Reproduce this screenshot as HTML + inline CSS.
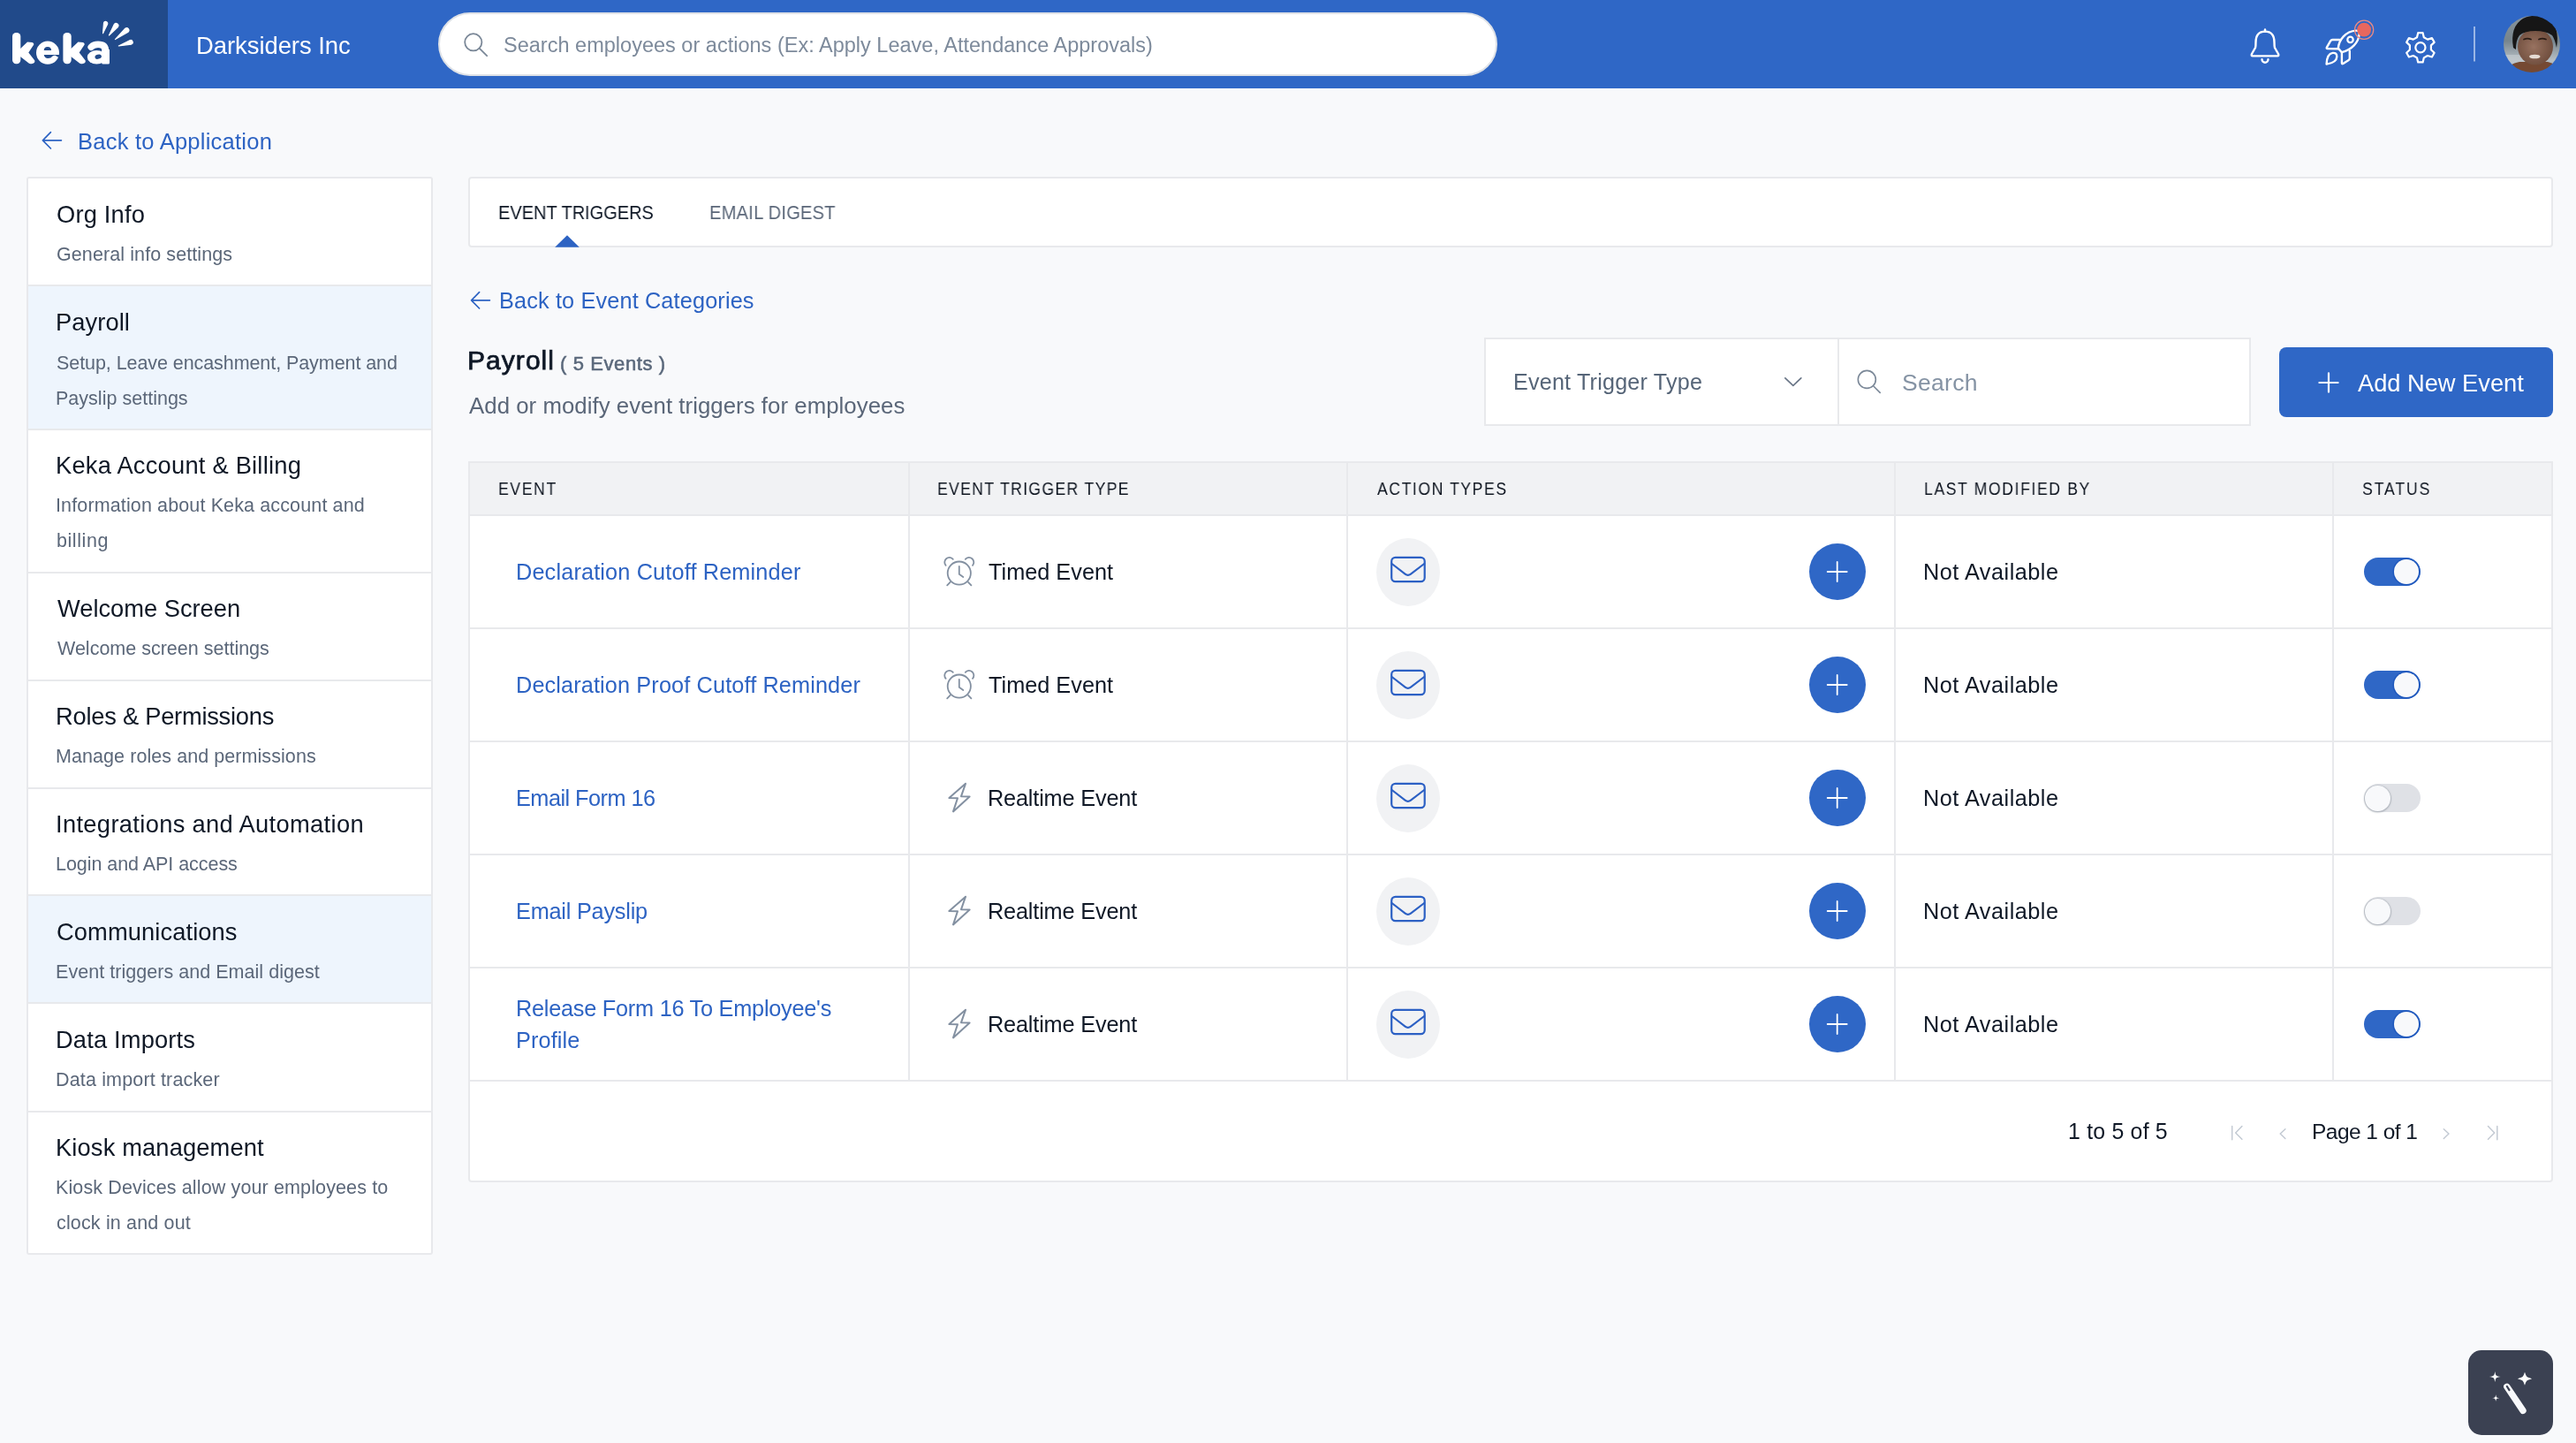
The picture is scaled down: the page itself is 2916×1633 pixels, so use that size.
<!DOCTYPE html>
<html><head><meta charset="utf-8"><title>Keka - Event Triggers</title>
<style>
html,body{margin:0;padding:0;}
body{width:2916px;height:1633px;overflow:hidden;position:relative;background:#f8f9fb;font-family:"Liberation Sans",sans-serif;}
.t{position:absolute;white-space:nowrap;will-change:transform;}
svg{overflow:visible}
</style></head><body>
<div style="position:absolute;left:0px;top:0px;width:2916px;height:100px;background:#2f67c6"></div>
<div style="position:absolute;left:0px;top:0px;width:190px;height:100px;background:#214a8a"></div>
<svg style="position:absolute;left:0;top:0" width="190" height="100" viewBox="0 0 190 100"><rect x="14.00" y="36.9" width="9.3" height="35.4" rx="4.2" fill="#fff"/><path d="M21.00 57 L31.00 47.6 L36.60 47.9 Q39.50 49.5 37.60 51.4 L32.30 59.6 L39.30 68.6 Q40.00 71.8 35.60 72.3 Q33.60 72.6 32.60 71.6 L21.00 62.6 Z" fill="#fff"/><rect x="71.40" y="36.9" width="9.3" height="35.4" rx="4.2" fill="#fff"/><path d="M78.40 57 L88.40 47.6 L94.00 47.9 Q96.90 49.5 95.00 51.4 L89.70 59.6 L96.70 68.6 Q97.40 71.8 93.00 72.3 Q91.00 72.6 90.00 71.6 L78.40 62.6 Z" fill="#fff"/><ellipse cx="54" cy="59.65" rx="13" ry="13.05" fill="#fff"/><path d="M49.7 57.1 Q49.9 52.9 53.9 52.9 Q57.9 52.9 58.1 57.1 Z" fill="#214a8a"/><path d="M49.7 62 H68 V66.2 Q65.5 64.2 62.6 62.7 Q60.4 62.5 59.6 63.4 Q57.6 65.9 54.2 65.9 Q50.6 65.9 49.7 62 Z" fill="#214a8a"/><path d="M103.2 53.3 Q106 50.3 111 50.3 Q119.6 50.3 119.6 58" fill="none" stroke="#fff" stroke-width="7.5" stroke-linecap="round"/><ellipse cx="109.4" cy="64.75" rx="10.6" ry="7.75" fill="#fff"/><path d="M115.1 56 H124 V71 Q124 72.5 122.5 72.5 H116.6 Q115.1 72.5 115.1 71 Z" fill="#fff"/><ellipse cx="111.2" cy="64.2" rx="3.8" ry="2.5" transform="rotate(-15 111.2 64.2)" fill="#214a8a"/><path d="M116.50 37.70 L121.72 27.19 A2.2 2.2 0 0 0 117.48 26.01 Z" fill="#fff" stroke="#fff" stroke-width="1.1" stroke-linejoin="round"/><path d="M123.40 40.00 L133.50 30.53 A2.6 2.6 0 0 0 129.30 27.47 Z" fill="#fff" stroke="#fff" stroke-width="1.1" stroke-linejoin="round"/><path d="M130.40 44.60 L145.02 36.23 A2.6 2.6 0 0 0 141.78 32.17 Z" fill="#fff" stroke="#fff" stroke-width="1.1" stroke-linejoin="round"/><path d="M134.30 52.00 L148.70 50.09 A2.4 2.4 0 0 0 147.30 45.51 Z" fill="#fff" stroke="#fff" stroke-width="1.1" stroke-linejoin="round"/></svg>
<div class="t" id="t0" style="left:221.6px;top:37.6px;font-size:27.4px;line-height:27.4px;color:#ffffff;letter-spacing:-0.027px;">Darksiders Inc</div>
<div style="position:absolute;left:496px;top:14px;width:1199px;height:72px;box-sizing:border-box;background:#fff;border:2px solid #dfe2e7;border-radius:36px"></div>
<svg style="position:absolute;left:520px;top:33px" width="40" height="40" viewBox="520 33 40 40">
<circle cx="535.8" cy="47.8" r="9.6" fill="none" stroke="#7b8898" stroke-width="1.8"/>
<path d="M542.6 54.6 L551.2 63.2" stroke="#7b8898" stroke-width="1.8" stroke-linecap="round"/>
</svg>
<div class="t" id="t1" style="left:569.8px;top:39.8px;font-size:23.5px;line-height:23.5px;color:#7d8a9b;letter-spacing:0.012px;">Search employees or actions (Ex: Apply Leave, Attendance Approvals)</div>
<svg style="position:absolute;left:2530px;top:20px" width="380" height="70" viewBox="2530 20 380 70">
<g fill="none" stroke="#fff" stroke-width="2.4" stroke-linecap="round" stroke-linejoin="round">
<path d="M2564 33.5 V35.6"/>
<path d="M2550 63.4 H2578 Q2580 63.4 2579 61 L2575 54 Q2574.5 52.5 2574.5 48 Q2574.5 35.6 2564 35.6 Q2553.5 35.6 2553.5 48 Q2553.5 52.5 2553 54 L2549 61 Q2548 63.4 2550 63.4 Z"/>
<path d="M2560.5 67.3 A3.5 3.5 0 0 0 2567.5 67.3"/>
<!-- rocket -->
<path d="M2646.8 54.6 C2647.6 45.2 2655 35.4 2667 34.6 Q2670.9 34.4 2670.7 38.2 C2670 48.2 2662 56.2 2650.9 59.2 Z" stroke-width="2.4"/>
<circle cx="2660.5" cy="44.9" r="3.2" stroke-width="2.2"/>
<path d="M2648.2 45 L2640.3 45 Q2639 45 2638.2 46.2 L2633.9 53.6 Q2633.2 55 2634.7 55 L2646.4 55.2" stroke-width="2.4"/>
<path d="M2659.8 57.6 V66.1 Q2659.8 67.3 2658.7 67.9 L2652.4 72 Q2650.9 72.9 2650.9 71.3 V59.6" stroke-width="2.4"/>
<path d="M2633.6 72.6 C2633.8 66 2636 60.6 2640.6 59.9 Q2645.3 59.4 2645.3 64.2 Q2644.9 70.9 2633.6 72.6 Z" stroke-width="2.4"/>
<!-- gear -->
<circle cx="2739.9" cy="53.8" r="5.6" stroke-width="2.2"/>
<path d="M2736.00 42.20 L2737.20 37.20 L2742.60 37.20 L2743.80 42.20 L2748.00 44.62 L2752.93 43.16 L2755.63 47.84 L2751.90 51.38 L2751.90 56.22 L2755.63 59.76 L2752.93 64.44 L2748.00 62.98 L2743.80 65.40 L2742.60 70.40 L2737.20 70.40 L2736.00 65.40 L2731.80 62.98 L2726.87 64.44 L2724.17 59.76 L2727.90 56.22 L2727.90 51.38 L2724.17 47.84 L2726.87 43.16 L2731.80 44.62 Z" stroke-width="2.2"/>
</g>
<circle cx="2676.1" cy="33.7" r="10.6" fill="none" stroke="#ea8a84" stroke-width="1.3"/>
<circle cx="2676.1" cy="33.7" r="7.9" fill="#e8675e"/>
<path d="M2801 30 V69.6" stroke="#9ab6e6" stroke-width="2"/>
</svg>
<svg style="position:absolute;left:2834px;top:18px" width="64" height="64" viewBox="0 0 64 64">
<defs><clipPath id="av"><circle cx="32" cy="32" r="32"/></clipPath>
<linearGradient id="avbg" x1="0" y1="0" x2="0" y2="1"><stop offset="0" stop-color="#8a959c"/><stop offset="0.45" stop-color="#77858d"/><stop offset="0.75" stop-color="#b6bec3"/><stop offset="1" stop-color="#9aa3a8"/></linearGradient>
<radialGradient id="face" cx="0.45" cy="0.5" r="0.6"><stop offset="0" stop-color="#987260"/><stop offset="1" stop-color="#6b4a3a"/></radialGradient><filter id="avb" x="-10%" y="-10%" width="120%" height="120%"><feGaussianBlur stdDeviation="0.7"/></filter></defs>
<g clip-path="url(#av)"><g filter="url(#avb)">
<rect x="-4" y="-4" width="72" height="72" fill="url(#avbg)"/>
<rect x="0" y="44" width="24" height="10" fill="#c3cace" opacity="0.7"/>
<path d="M0 64 Q6 54 18 52 L50 52 Q60 54 64 64 Z" fill="#744a31"/>
<ellipse cx="36" cy="35" rx="20" ry="20.5" fill="url(#face)"/>
<path d="M11 36 Q7 12 22 3 Q34 -3 50 2 Q64 12 60 36 Q58 26 55 22 Q48 17 36 17 Q24 17 18 22 Q14 27 14 38 Z" fill="#141414"/>
<path d="M23 26.5 Q27 24.8 31 26.5 M40 26.5 Q44 24.8 48 26.5" stroke="#2a1c15" stroke-width="1.8" fill="none" stroke-linecap="round"/>
<ellipse cx="35.3" cy="46" rx="6.2" ry="2.3" fill="#e6dcd4"/>
</g></g></svg>
<svg style="position:absolute;left:40px;top:140px" width="40" height="40" viewBox="40 140 40 40">
<path d="M57.4 149.6 L48.4 158.8 L57.4 168 M48.4 158.8 H69.4" fill="none" stroke="#2d63c3" stroke-width="1.7" stroke-linecap="round" stroke-linejoin="round"/></svg>
<div class="t" id="t2" style="left:87.6px;top:148.4px;font-size:25.5px;line-height:25.5px;color:#2d63c3;letter-spacing:0.245px;">Back to Application</div>
<div style="position:absolute;left:30px;top:200px;width:460px;height:1220px;box-sizing:border-box;background:#fff;border:2px solid #e8e9ec;border-radius:3px"></div>
<div style="position:absolute;left:32px;top:322px;width:456px;height:2px;background:#e8e9ec"></div>
<div class="t" id="t3" style="left:63.7px;top:229.1px;font-size:27.3px;line-height:27.3px;color:#0f1826;letter-spacing:0.182px;">Org Info</div>
<div class="t" id="t4" style="left:63.7px;top:278.4px;font-size:21.5px;line-height:21.5px;color:#5b6779;letter-spacing:0.095px;">General info settings</div>
<div style="position:absolute;left:32px;top:324px;width:456px;height:161px;background:#eef5fd"></div>
<div style="position:absolute;left:32px;top:485px;width:456px;height:2px;background:#e8e9ec"></div>
<div class="t" id="t5" style="left:62.7px;top:351.1px;font-size:27.3px;line-height:27.3px;color:#0f1826;letter-spacing:0.083px;">Payroll</div>
<div class="t" id="t6" style="left:63.7px;top:400.5px;font-size:21.5px;line-height:21.5px;color:#5b6779;letter-spacing:-0.072px;">Setup, Leave encashment, Payment and</div>
<div class="t" id="t7" style="left:62.7px;top:440.5px;font-size:21.5px;line-height:21.5px;color:#5b6779;letter-spacing:0.016px;">Payslip settings</div>
<div style="position:absolute;left:32px;top:647px;width:456px;height:2px;background:#e8e9ec"></div>
<div class="t" id="t8" style="left:62.7px;top:513.1px;font-size:27.3px;line-height:27.3px;color:#0f1826;letter-spacing:0.223px;">Keka Account &amp; Billing</div>
<div class="t" id="t9" style="left:62.7px;top:562.4px;font-size:21.5px;line-height:21.5px;color:#5b6779;letter-spacing:0.13px;">Information about Keka account and</div>
<div class="t" id="t10" style="left:63.7px;top:602.4px;font-size:21.5px;line-height:21.5px;color:#5b6779;letter-spacing:0.567px;">billing</div>
<div style="position:absolute;left:32px;top:769px;width:456px;height:2px;background:#e8e9ec"></div>
<div class="t" id="t11" style="left:64.7px;top:675.1px;font-size:27.3px;line-height:27.3px;color:#0f1826;letter-spacing:-0.018px;">Welcome Screen</div>
<div class="t" id="t12" style="left:64.7px;top:724.4px;font-size:21.5px;line-height:21.5px;color:#5b6779;letter-spacing:0.002px;">Welcome screen settings</div>
<div style="position:absolute;left:32px;top:891px;width:456px;height:2px;background:#e8e9ec"></div>
<div class="t" id="t13" style="left:62.7px;top:797.1px;font-size:27.3px;line-height:27.3px;color:#0f1826;letter-spacing:-0.249px;">Roles &amp; Permissions</div>
<div class="t" id="t14" style="left:62.7px;top:846.4px;font-size:21.5px;line-height:21.5px;color:#5b6779;letter-spacing:0.069px;">Manage roles and permissions</div>
<div style="position:absolute;left:32px;top:1012px;width:456px;height:2px;background:#e8e9ec"></div>
<div class="t" id="t15" style="left:62.7px;top:919.1px;font-size:27.3px;line-height:27.3px;color:#0f1826;letter-spacing:0.334px;">Integrations and Automation</div>
<div class="t" id="t16" style="left:62.7px;top:968.4px;font-size:21.5px;line-height:21.5px;color:#5b6779;letter-spacing:-0.048px;">Login and API access</div>
<div style="position:absolute;left:32px;top:1014px;width:456px;height:120px;background:#eef5fd"></div>
<div style="position:absolute;left:32px;top:1134px;width:456px;height:2px;background:#e8e9ec"></div>
<div class="t" id="t17" style="left:63.7px;top:1041.1px;font-size:27.3px;line-height:27.3px;color:#0f1826;letter-spacing:0.095px;">Communications</div>
<div class="t" id="t18" style="left:62.7px;top:1090.4px;font-size:21.5px;line-height:21.5px;color:#5b6779;letter-spacing:0.04px;">Event triggers and Email digest</div>
<div style="position:absolute;left:32px;top:1257px;width:456px;height:2px;background:#e8e9ec"></div>
<div class="t" id="t19" style="left:62.7px;top:1163.1px;font-size:27.3px;line-height:27.3px;color:#0f1826;letter-spacing:0.156px;">Data Imports</div>
<div class="t" id="t20" style="left:62.7px;top:1212.4px;font-size:21.5px;line-height:21.5px;color:#5b6779;letter-spacing:0.155px;">Data import tracker</div>
<div class="t" id="t21" style="left:62.7px;top:1285.1px;font-size:27.3px;line-height:27.3px;color:#0f1826;letter-spacing:0.134px;">Kiosk management</div>
<div class="t" id="t22" style="left:62.7px;top:1333.9px;font-size:21.5px;line-height:21.5px;color:#5b6779;letter-spacing:0.128px;">Kiosk Devices allow your employees to</div>
<div class="t" id="t23" style="left:63.7px;top:1373.9px;font-size:21.5px;line-height:21.5px;color:#5b6779;letter-spacing:0.156px;">clock in and out</div>
<div style="position:absolute;left:530px;top:200px;width:2360px;height:80px;box-sizing:border-box;background:#fff;border:2px solid #e8e9ec;border-radius:4px"></div>
<div class="t" id="t24" style="left:564.0px;top:229.5px;font-size:21.8px;line-height:21.8px;color:#0f1826;letter-spacing:-0.048px;transform:scaleX(0.92);transform-origin:0 0;">EVENT TRIGGERS</div>
<div class="t" id="t25" style="left:803.0px;top:229.5px;font-size:21.8px;line-height:21.8px;color:#5b6779;letter-spacing:0.212px;transform:scaleX(0.925);transform-origin:0 0;">EMAIL DIGEST</div>
<svg style="position:absolute;left:620px;top:260px" width="50" height="22" viewBox="620 260 50 22"><path d="M628.2 279.8 L642 266.2 L655.8 279.8 Z" fill="#2d63c3"/></svg>
<svg style="position:absolute;left:525px;top:320px" width="40" height="40" viewBox="525 320 40 40">
<path d="M542.6 330.6 L533.6 339.8 L542.6 349 M533.6 339.8 H554.4" fill="none" stroke="#2d63c3" stroke-width="1.7" stroke-linecap="round" stroke-linejoin="round"/></svg>
<div class="t" id="t26" style="left:565.2px;top:328.2px;font-size:25.3px;line-height:25.3px;color:#2d63c3;letter-spacing:0.133px;">Back to Event Categories</div>
<div class="t" id="t27" style="left:529.4px;top:393.0px;font-size:30px;line-height:30px;color:#0f1826;letter-spacing:1.0499999999999998px;-webkit-text-stroke:0.75px #0f1826;">Payroll</div>
<div class="t" id="t28" style="left:634.0px;top:401.1px;font-size:22px;line-height:22px;color:#5a687b;letter-spacing:0.6009999999999999px;-webkit-text-stroke:0.55px #5a687b;">( 5 Events )</div>
<div class="t" id="t29" style="left:531.4px;top:447.2px;font-size:25.8px;line-height:25.8px;color:#5b6779;letter-spacing:0.037px;">Add or modify event triggers for employees</div>
<div style="position:absolute;left:1680px;top:382px;width:868px;height:100px;box-sizing:border-box;background:#fff;border:2px solid #e8e9ec"></div>
<div style="position:absolute;left:2080px;top:384px;width:2px;height:96px;background:#e8e9ec"></div>
<div class="t" id="t30" style="left:1713.0px;top:419.7px;font-size:25.1px;line-height:25.1px;color:#566578;letter-spacing:0.219px;">Event Trigger Type</div>
<svg style="position:absolute;left:2015px;top:420px" width="30" height="22" viewBox="2015 420 30 22">
<path d="M2020.8 427.8 L2029.8 436.3 L2038.8 427.8" fill="none" stroke="#6b7788" stroke-width="1.7" stroke-linecap="round" stroke-linejoin="round"/></svg>
<svg style="position:absolute;left:2095px;top:410px" width="40" height="40" viewBox="2095 410 40 40">
<circle cx="2113.3" cy="429.4" r="10" fill="none" stroke="#7b8898" stroke-width="1.6"/>
<path d="M2120.6 436.8 L2128.2 444.4" stroke="#7b8898" stroke-width="1.6" stroke-linecap="round"/></svg>
<div class="t" id="t31" style="left:2153.2px;top:419.8px;font-size:26.5px;line-height:26.5px;color:#8593a4;letter-spacing:0.3px;">Search</div>
<div style="position:absolute;left:2580px;top:393px;width:310px;height:79px;background:#2f67c6;border-radius:8px"></div>
<svg style="position:absolute;left:2620px;top:418px" width="32" height="32" viewBox="2620 418 32 32">
<path d="M2636 422.4 V443.6 M2625.4 433 H2646.6" stroke="#fff" stroke-width="2.2" stroke-linecap="round"/></svg>
<div class="t" id="t32" style="left:2669.2px;top:420.3px;font-size:27.3px;line-height:27.3px;color:#ffffff;letter-spacing:-0.031px;">Add New Event</div>
<div style="position:absolute;left:530px;top:522px;width:2360px;height:816px;box-sizing:border-box;background:#fff;border:2px solid #e8e9ec;border-radius:0 0 4px 4px"></div>
<div style="position:absolute;left:532px;top:524px;width:2356px;height:58px;background:#f1f2f4"></div>
<div style="position:absolute;left:532px;top:582px;width:2356px;height:2px;background:#e8e9ec"></div>
<div style="position:absolute;left:1028px;top:524px;width:2px;height:699px;background:#e8e9ec"></div>
<div style="position:absolute;left:1524px;top:524px;width:2px;height:699px;background:#e8e9ec"></div>
<div style="position:absolute;left:2144px;top:524px;width:2px;height:699px;background:#e8e9ec"></div>
<div style="position:absolute;left:2640px;top:524px;width:2px;height:699px;background:#e8e9ec"></div>
<div style="position:absolute;left:532px;top:710px;width:2356px;height:2px;background:#e8e9ec"></div>
<div style="position:absolute;left:532px;top:838px;width:2356px;height:2px;background:#e8e9ec"></div>
<div style="position:absolute;left:532px;top:966px;width:2356px;height:2px;background:#e8e9ec"></div>
<div style="position:absolute;left:532px;top:1094px;width:2356px;height:2px;background:#e8e9ec"></div>
<div style="position:absolute;left:532px;top:1222px;width:2356px;height:2px;background:#e8e9ec"></div>
<div class="t" id="t33" style="left:564.2px;top:543.8px;font-size:19.6px;line-height:19.6px;color:#0e1520;letter-spacing:1.775px;transform:scaleX(0.9);transform-origin:0 0;">EVENT</div>
<div class="t" id="t34" style="left:1061.0px;top:543.8px;font-size:19.6px;line-height:19.6px;color:#0e1520;letter-spacing:1.47px;transform:scaleX(0.9);transform-origin:0 0;">EVENT TRIGGER TYPE</div>
<div class="t" id="t35" style="left:1559.0px;top:543.8px;font-size:19.6px;line-height:19.6px;color:#0e1520;letter-spacing:1.718px;transform:scaleX(0.9);transform-origin:0 0;">ACTION TYPES</div>
<div class="t" id="t36" style="left:2178.2px;top:543.8px;font-size:19.6px;line-height:19.6px;color:#0e1520;letter-spacing:1.773px;transform:scaleX(0.9);transform-origin:0 0;">LAST MODIFIED BY</div>
<div class="t" id="t37" style="left:2673.8px;top:543.8px;font-size:19.6px;line-height:19.6px;color:#0e1520;letter-spacing:2.08px;transform:scaleX(0.9);transform-origin:0 0;">STATUS</div>
<div class="t" id="t38" style="left:583.6px;top:634.9px;font-size:25.3px;line-height:25.3px;color:#2d63c3;letter-spacing:0.142px;">Declaration Cutoff Reminder</div>
<svg style="position:absolute;left:1065px;top:625.3px" width="44" height="44" viewBox="1065 625.3 44 44">
<g fill="none" stroke="#8390a1" stroke-width="1.8" stroke-linecap="round" stroke-linejoin="round">
<circle cx="1085.8" cy="648.9" r="13.1"/>
<path d="M1085.8 641.2 V650.1 L1090.3 653.3"/>
<path d="M1070.6 640.2 A5.4 5.4 0 0 1 1078.8 633.1"/>
<path d="M1101 640.2 A5.4 5.4 0 0 0 1092.8 633.1"/>
<path d="M1075.6 659.1 L1072.2 662.7 M1096 659.1 L1099.4 662.7"/>
</g></svg>
<div class="t" id="t39" style="left:1118.8px;top:634.8px;font-size:25.3px;line-height:25.3px;color:#0f1826;">Timed Event</div>
<div style="position:absolute;left:1558.1px;top:608.6999999999999px;width:72.1px;height:77.2px;background:#f1f2f4;border-radius:50%"></div>
<svg style="position:absolute;left:1570px;top:625.3px" width="48" height="44" viewBox="1570 625.3 48 44">
<g fill="none" stroke="#2c60c4" stroke-width="2.2" stroke-linecap="round" stroke-linejoin="round">
<rect x="1575.2" y="631.1" width="37.5" height="27.4" rx="4.4"/>
<path d="M1575.6 638.3 L1590.6 649.9 Q1593.8 652.3 1597 649.9 L1612.2 638.3"/>
</g></svg>
<div style="position:absolute;left:2047.7px;top:615.3px;width:64px;height:64px;background:#2f67c6;border-radius:50%"></div>
<svg style="position:absolute;left:2065px;top:632.3px" width="30" height="30" viewBox="2065 632.3 30 30">
<path d="M2079.7 636.3 V658.3 M2068.7 647.3 H2090.7" stroke="#fff" stroke-width="1.8" stroke-linecap="round"/></svg>
<div class="t" id="t40" style="left:2177.2px;top:634.8px;font-size:25.3px;line-height:25.3px;color:#0f1826;letter-spacing:0.485px;">Not Available</div>
<div style="position:absolute;left:2676px;top:631.3px;width:64px;height:32px;background:#2f67c6;border-radius:16px"></div>
<div style="position:absolute;left:2709.9px;top:633.3px;width:28px;height:28px;box-sizing:border-box;background:#f8f9fb;border-radius:50%;box-shadow:0 0 0 1.5px #1f58bd"></div>
<div class="t" id="t41" style="left:583.6px;top:762.9px;font-size:25.3px;line-height:25.3px;color:#2d63c3;letter-spacing:0.116px;">Declaration Proof Cutoff Reminder</div>
<svg style="position:absolute;left:1065px;top:753.3px" width="44" height="44" viewBox="1065 753.3 44 44">
<g fill="none" stroke="#8390a1" stroke-width="1.8" stroke-linecap="round" stroke-linejoin="round">
<circle cx="1085.8" cy="776.9" r="13.1"/>
<path d="M1085.8 769.2 V778.1 L1090.3 781.3"/>
<path d="M1070.6 768.2 A5.4 5.4 0 0 1 1078.8 761.1"/>
<path d="M1101 768.2 A5.4 5.4 0 0 0 1092.8 761.1"/>
<path d="M1075.6 787.1 L1072.2 790.7 M1096 787.1 L1099.4 790.7"/>
</g></svg>
<div class="t" id="t42" style="left:1118.8px;top:762.8px;font-size:25.3px;line-height:25.3px;color:#0f1826;">Timed Event</div>
<div style="position:absolute;left:1558.1px;top:736.6999999999999px;width:72.1px;height:77.2px;background:#f1f2f4;border-radius:50%"></div>
<svg style="position:absolute;left:1570px;top:753.3px" width="48" height="44" viewBox="1570 753.3 48 44">
<g fill="none" stroke="#2c60c4" stroke-width="2.2" stroke-linecap="round" stroke-linejoin="round">
<rect x="1575.2" y="759.1" width="37.5" height="27.4" rx="4.4"/>
<path d="M1575.6 766.3 L1590.6 777.9 Q1593.8 780.3 1597 777.9 L1612.2 766.3"/>
</g></svg>
<div style="position:absolute;left:2047.7px;top:743.3px;width:64px;height:64px;background:#2f67c6;border-radius:50%"></div>
<svg style="position:absolute;left:2065px;top:760.3px" width="30" height="30" viewBox="2065 760.3 30 30">
<path d="M2079.7 764.3 V786.3 M2068.7 775.3 H2090.7" stroke="#fff" stroke-width="1.8" stroke-linecap="round"/></svg>
<div class="t" id="t43" style="left:2177.2px;top:762.8px;font-size:25.3px;line-height:25.3px;color:#0f1826;letter-spacing:0.485px;">Not Available</div>
<div style="position:absolute;left:2676px;top:759.3px;width:64px;height:32px;background:#2f67c6;border-radius:16px"></div>
<div style="position:absolute;left:2709.9px;top:761.3px;width:28px;height:28px;box-sizing:border-box;background:#f8f9fb;border-radius:50%;box-shadow:0 0 0 1.5px #1f58bd"></div>
<div class="t" id="t44" style="left:583.6px;top:890.8px;font-size:25.3px;line-height:25.3px;color:#2d63c3;letter-spacing:-0.532px;">Email Form 16</div>
<svg style="position:absolute;left:1065px;top:881.3px" width="44" height="44" viewBox="1065 881.3 44 44">
<path d="M1093 887.1 L1074.4 903.4 L1084 903.6 L1079 918.7 L1097.6 901.8 L1088 901.5 Z" fill="none" stroke="#8390a1" stroke-width="2" stroke-linecap="round" stroke-linejoin="round"/></svg>
<div class="t" id="t45" style="left:1118.1px;top:890.8px;font-size:25.3px;line-height:25.3px;color:#0f1826;letter-spacing:-0.18px;">Realtime Event</div>
<div style="position:absolute;left:1558.1px;top:864.6999999999999px;width:72.1px;height:77.2px;background:#f1f2f4;border-radius:50%"></div>
<svg style="position:absolute;left:1570px;top:881.3px" width="48" height="44" viewBox="1570 881.3 48 44">
<g fill="none" stroke="#2c60c4" stroke-width="2.2" stroke-linecap="round" stroke-linejoin="round">
<rect x="1575.2" y="887.1" width="37.5" height="27.4" rx="4.4"/>
<path d="M1575.6 894.3 L1590.6 905.9 Q1593.8 908.3 1597 905.9 L1612.2 894.3"/>
</g></svg>
<div style="position:absolute;left:2047.7px;top:871.3px;width:64px;height:64px;background:#2f67c6;border-radius:50%"></div>
<svg style="position:absolute;left:2065px;top:888.3px" width="30" height="30" viewBox="2065 888.3 30 30">
<path d="M2079.7 892.3 V914.3 M2068.7 903.3 H2090.7" stroke="#fff" stroke-width="1.8" stroke-linecap="round"/></svg>
<div class="t" id="t46" style="left:2177.2px;top:890.8px;font-size:25.3px;line-height:25.3px;color:#0f1826;letter-spacing:0.485px;">Not Available</div>
<div style="position:absolute;left:2676px;top:887.3px;width:64px;height:32px;background:#dfe1e6;border-radius:16px"></div>
<div style="position:absolute;left:2677px;top:888.8px;width:29px;height:29px;box-sizing:border-box;background:#f8f9fb;border-radius:50%;box-shadow:0 0.5px 1.5px 1px rgba(120,128,140,0.45)"></div>
<div class="t" id="t47" style="left:583.6px;top:1018.9px;font-size:25.3px;line-height:25.3px;color:#2d63c3;letter-spacing:-0.227px;">Email Payslip</div>
<svg style="position:absolute;left:1065px;top:1009.3px" width="44" height="44" viewBox="1065 1009.3 44 44">
<path d="M1093 1015.1 L1074.4 1031.4 L1084 1031.6 L1079 1046.7 L1097.6 1029.8 L1088 1029.5 Z" fill="none" stroke="#8390a1" stroke-width="2" stroke-linecap="round" stroke-linejoin="round"/></svg>
<div class="t" id="t48" style="left:1118.1px;top:1018.8px;font-size:25.3px;line-height:25.3px;color:#0f1826;letter-spacing:-0.18px;">Realtime Event</div>
<div style="position:absolute;left:1558.1px;top:992.6999999999999px;width:72.1px;height:77.2px;background:#f1f2f4;border-radius:50%"></div>
<svg style="position:absolute;left:1570px;top:1009.3px" width="48" height="44" viewBox="1570 1009.3 48 44">
<g fill="none" stroke="#2c60c4" stroke-width="2.2" stroke-linecap="round" stroke-linejoin="round">
<rect x="1575.2" y="1015.1" width="37.5" height="27.4" rx="4.4"/>
<path d="M1575.6 1022.3 L1590.6 1033.9 Q1593.8 1036.3 1597 1033.9 L1612.2 1022.3"/>
</g></svg>
<div style="position:absolute;left:2047.7px;top:999.3px;width:64px;height:64px;background:#2f67c6;border-radius:50%"></div>
<svg style="position:absolute;left:2065px;top:1016.3px" width="30" height="30" viewBox="2065 1016.3 30 30">
<path d="M2079.7 1020.3 V1042.3 M2068.7 1031.3 H2090.7" stroke="#fff" stroke-width="1.8" stroke-linecap="round"/></svg>
<div class="t" id="t49" style="left:2177.2px;top:1018.8px;font-size:25.3px;line-height:25.3px;color:#0f1826;letter-spacing:0.485px;">Not Available</div>
<div style="position:absolute;left:2676px;top:1015.3px;width:64px;height:32px;background:#dfe1e6;border-radius:16px"></div>
<div style="position:absolute;left:2677px;top:1016.8px;width:29px;height:29px;box-sizing:border-box;background:#f8f9fb;border-radius:50%;box-shadow:0 0.5px 1.5px 1px rgba(120,128,140,0.45)"></div>
<div class="t" id="t50" style="left:583.6px;top:1128.9px;font-size:25.3px;line-height:25.3px;color:#2d63c3;letter-spacing:-0.249px;">Release Form 16 To Employee's</div>
<div class="t" id="t51" style="left:583.6px;top:1164.8px;font-size:25.3px;line-height:25.3px;color:#2d63c3;letter-spacing:0.114px;">Profile</div>
<svg style="position:absolute;left:1065px;top:1137.3px" width="44" height="44" viewBox="1065 1137.3 44 44">
<path d="M1093 1143.1 L1074.4 1159.4 L1084 1159.6 L1079 1174.7 L1097.6 1157.8 L1088 1157.5 Z" fill="none" stroke="#8390a1" stroke-width="2" stroke-linecap="round" stroke-linejoin="round"/></svg>
<div class="t" id="t52" style="left:1118.1px;top:1146.8px;font-size:25.3px;line-height:25.3px;color:#0f1826;letter-spacing:-0.18px;">Realtime Event</div>
<div style="position:absolute;left:1558.1px;top:1120.7px;width:72.1px;height:77.2px;background:#f1f2f4;border-radius:50%"></div>
<svg style="position:absolute;left:1570px;top:1137.3px" width="48" height="44" viewBox="1570 1137.3 48 44">
<g fill="none" stroke="#2c60c4" stroke-width="2.2" stroke-linecap="round" stroke-linejoin="round">
<rect x="1575.2" y="1143.1" width="37.5" height="27.4" rx="4.4"/>
<path d="M1575.6 1150.3 L1590.6 1161.9 Q1593.8 1164.3 1597 1161.9 L1612.2 1150.3"/>
</g></svg>
<div style="position:absolute;left:2047.7px;top:1127.3px;width:64px;height:64px;background:#2f67c6;border-radius:50%"></div>
<svg style="position:absolute;left:2065px;top:1144.3px" width="30" height="30" viewBox="2065 1144.3 30 30">
<path d="M2079.7 1148.3 V1170.3 M2068.7 1159.3 H2090.7" stroke="#fff" stroke-width="1.8" stroke-linecap="round"/></svg>
<div class="t" id="t53" style="left:2177.2px;top:1146.8px;font-size:25.3px;line-height:25.3px;color:#0f1826;letter-spacing:0.485px;">Not Available</div>
<div style="position:absolute;left:2676px;top:1143.3px;width:64px;height:32px;background:#2f67c6;border-radius:16px"></div>
<div style="position:absolute;left:2709.9px;top:1145.3px;width:28px;height:28px;box-sizing:border-box;background:#f8f9fb;border-radius:50%;box-shadow:0 0 0 1.5px #1f58bd"></div>
<div class="t" id="t54" style="left:2341.0px;top:1267.9px;font-size:24.9px;line-height:24.9px;color:#0f1826;letter-spacing:0.2px;">1 to 5 of 5</div>
<svg style="position:absolute;left:2515px;top:1265px" width="320" height="35" viewBox="2515 1265 320 35">
<g fill="none" stroke="#c3cad3" stroke-width="1.5" stroke-linecap="round" stroke-linejoin="round">
<path d="M2526.7 1274.6 V1289.7 M2537.9 1274.6 L2530.7 1282 L2537.9 1289.2"/>
<path d="M2586.9 1277.7 L2581.2 1283 L2586.9 1288.5"/>
<path d="M2766.3 1277.7 L2772 1283 L2766.3 1288.5"/>
<path d="M2826.8 1274.6 V1289.7 M2816.5 1274.6 L2823.7 1282 L2816.5 1289.2"/>
</g></svg>
<div class="t" id="t55" style="left:2616.8px;top:1269.3px;font-size:24.5px;line-height:24.5px;color:#0f1826;letter-spacing:-0.54px;">Page 1 of 1</div>
<div style="position:absolute;left:2794px;top:1528px;width:96px;height:96px;background:#3b4152;border-radius:15px"></div>
<svg style="position:absolute;left:2794px;top:1528px" width="96" height="96" viewBox="2794 1528 96 96">
<g fill="#fff">
<path d="M2824.30 1551.90 C2825.25 1557.05 2825.25 1557.05 2830.70 1558.00 C2825.25 1558.95 2825.25 1558.95 2824.30 1564.10 C2823.35 1558.95 2823.35 1558.95 2817.90 1558.00 C2823.35 1557.05 2823.35 1557.05 2824.30 1551.90 Z"/>
<path d="M2858.00 1552.80 C2859.90 1558.40 2859.90 1558.40 2866.10 1560.30 C2859.90 1562.20 2859.90 1562.20 2858.00 1567.80 C2856.10 1562.20 2856.10 1562.20 2849.90 1560.30 C2856.10 1558.40 2856.10 1558.40 2858.00 1552.80 Z"/>
<path d="M2825.20 1578.30 C2825.75 1581.65 2825.75 1581.65 2829.10 1582.20 C2825.75 1582.75 2825.75 1582.75 2825.20 1586.10 C2824.65 1582.75 2824.65 1582.75 2821.30 1582.20 C2824.65 1581.65 2824.65 1581.65 2825.20 1578.30 Z"/>
</g>
<path d="M2837.8 1569.3 L2856.0 1596.4" stroke="#f8f9fb" stroke-width="7.4" stroke-linecap="round"/>
<path d="M2837.9 1569.0 L2840.5 1573.1" stroke="#3b4152" stroke-width="2.2" stroke-linecap="round"/>
</svg>
</body></html>
